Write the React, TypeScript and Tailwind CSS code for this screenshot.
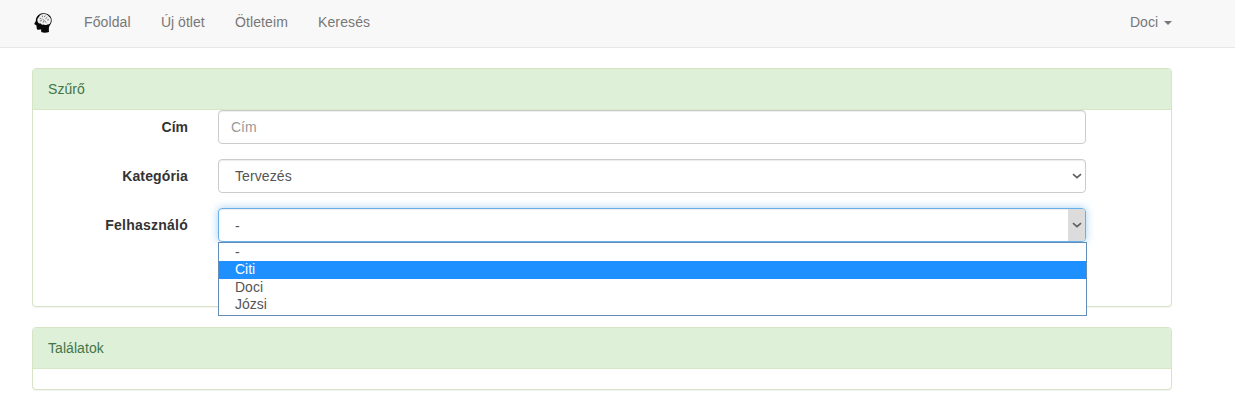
import React from "react";

const navItems = [
  { label: "Főoldal", style: "w-[77px] tracking-[0.1px]" },
  { label: "Új ötlet", style: "w-[74px]" },
  { label: "Ötleteim", style: "w-[83px] tracking-[0.1px]" },
  { label: "Keresés", style: "w-[82px] tracking-[0.12px]" },
];

const users = [
  { name: "-", style: "h-[18px] leading-[18px]" },
  { name: "Citi", style: "h-[18px] bg-[#1e90ff] leading-[17px] text-white" },
  { name: "Doci", style: "h-[17px] leading-[17px]" },
  { name: "Józsi", style: "h-[18px] leading-[17px]" },
];

function Logo() {
  return (
    <svg className="mt-[13px] h-5 w-[19px]" viewBox="0 0 20 20" preserveAspectRatio="none" aria-hidden="true">
      <path
        d="M9 .3C13.8-.4 18.4 2.500 18.600 7c.1 2.600-1.200 4.400-2.300 6.100-.7 1.300-.8 3.800-.5 5.800-2.400 1-6 1-8.200.2l-.1-2.500c-1.300 0-3.100.5-4-.1-.8-.6-.5-1.600-.7-2.500-.3-.8-.5-1.300-.2-1.800L.4 11.200c-.2-.7 1.100-2 1.500-3.100C2 4 4.300 1 9 .3Z"
        fill="#080808"
      />
      <path
        d="M4 8.900c-1-1.600-.3-4 1.200-4.900C6 1.900 8.400.8 10.300 1.100c2-.3 4.500.6 5.400 2.400 1.800.9 2.600 3.200 1.900 5-.1 2-1.900 3.200-3.600 2.900-1 .9-2.600.8-3.500.1-1.300.4-2.800 0-3.200-1.100-1.400.1-2.800-.4-3.300-1.500Z"
        fill="#f1f1f1"
      />
      <path
        d="M6 5.200 7.800 6M8.600 2.500l.5 1.700M11.800 2.400l-1 1.700M14 4.200l-2 1.600M6 8.200l2.300-.7M9 6l4.200 3.800M15.800 6.600l-2 .4M9.600 9.800l.4-1.600"
        fill="none"
        stroke="#555"
        strokeWidth=".8"
      />
    </svg>
  );
}

function Chevron() {
  return (
    <svg className="h-[6px] w-[10px]" viewBox="0 0 10 6" fill="none" aria-hidden="true">
      <path d="m1 1.200 4 3.500 4-3.500" stroke="#606060" strokeWidth="1.700" />
    </svg>
  );
}

function Panel({ title, height, children }: { title: string; height: string; children?: React.ReactNode }) {
  return (
    <section className={`${height} rounded-[4px] border border-[#d6e3c4] bg-white shadow-[0_1px_1px_rgba(0,0,0,0.05)]`}>
      <h3 className="h-[41px] rounded-t-[3px] border-b border-[#d6e9c6] bg-[#dff0d8] px-[15px] pt-[10px] leading-5 tracking-[0.06px] text-[#43754a]">
        {title}
      </h3>
      {children}
    </section>
  );
}

function Row({ label, tracking = "", children }: { label: string; tracking?: string; children: React.ReactNode }) {
  return (
    <div className="flex h-[34px]">
      <label className={`w-[155px] pt-[7px] text-right font-bold leading-5 text-[#333] ${tracking}`}>{label}</label>
      <div className="relative ml-[30px] w-[868px]">{children}</div>
    </div>
  );
}

export default function App() {
  return (
    <div className="h-[406px] overflow-hidden bg-white font-['Liberation_Sans',Arial,sans-serif] text-[14px] text-[#555]">
      <nav className="flex h-12 border-b border-[#e7e7e7] bg-[#f8f8f8] pl-[34px] pr-[63px] text-[#777]">
        <Logo />
        <ul className="ml-[31px] flex pt-3 leading-5">
          {navItems.map((item) => (
            <li key={item.label} className={item.style}>
              <a>{item.label}</a>
            </li>
          ))}
        </ul>
        <button className="ml-auto mt-3 flex h-5 gap-[6px] self-start leading-5">
          Doci
          <svg className="mt-[9px] h-1 w-2" viewBox="0 0 8 4" aria-hidden="true">
            <path d="M0 0h8L4 4Z" fill="#777" />
          </svg>
        </button>
      </nav>

      <main className="ml-8 flex w-[1140px] flex-col gap-5 pt-5">
        <Panel title="Szűrő" height="h-[239px]">
          <form className="flex flex-col gap-[15px]">
            <Row label="Cím">
              <input
                className="block h-[34px] w-full rounded-[4px] border border-[#ccc] bg-white px-3 py-[6px] leading-5 shadow-[inset_0_1px_1px_rgba(0,0,0,0.075)] outline-none placeholder:text-[#999]"
                placeholder="Cím"
              />
            </Row>
            <Row label="Kategória" tracking="tracking-[0.14px]">
              <div className="flex h-[34px] items-center justify-between rounded-[4px] border border-[#ccc] pl-4 pr-[3px] leading-5 tracking-[0.1px] shadow-[inset_0_1px_1px_rgba(0,0,0,0.075)]">
                Tervezés
                <Chevron />
              </div>
            </Row>
            <Row label="Felhasználó" tracking="tracking-[0.24px]">
              <div className="flex h-[34px] items-center justify-between overflow-hidden rounded-[4px] border border-[#66afe9] pl-4 leading-5 shadow-[inset_0_1px_1px_rgba(0,0,0,0.075),0_0_8px_rgba(102,175,233,0.6)]">
                <span className="pt-0.5">-</span>
                <span className="flex h-full w-[17px] items-center justify-center bg-[#dcdcdc]">
                  <Chevron />
                </span>
              </div>
              <ul className="absolute left-0 top-[34px] z-10 h-[74px] w-[869px] border border-[#648cb9] bg-white">
                {users.map((user) => (
                  <li key={user.name} className={`pl-4 ${user.style}`}>
                    {user.name}
                  </li>
                ))}
              </ul>
            </Row>
          </form>
        </Panel>
        <Panel title="Találatok" height="h-[63px]" />
      </main>
    </div>
  );
}
